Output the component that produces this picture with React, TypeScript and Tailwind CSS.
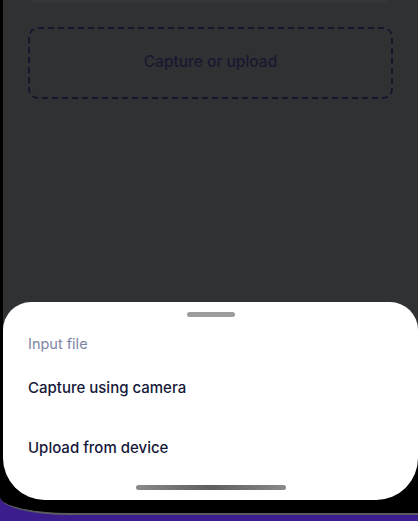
import React from "react";

const font = { fontFamily: "Inter, 'Noto Sans', sans-serif" };

function BottomSheet() {
  return (
    <div className="flex h-[198px] flex-col rounded-t-[28px] bg-white">
      <div className="mx-auto mt-[10px] h-[5px] w-[48px] rounded-full bg-[#9d9d9d]" />
      <div className="flex flex-col px-[25px]">
        <p className="mt-[17px] text-[14.5px] leading-[20px] text-[#7c84a4]">Input file</p>
        <button className="mt-[24px] text-left text-[15px] font-medium leading-[20px] text-[#141838]">
          Capture using camera
        </button>
        <button className="mt-[40px] text-left text-[15px] font-medium leading-[20px] text-[#141838]">
          Upload from device
        </button>
      </div>
      <div className="mx-auto mt-auto mb-[10px] h-[5px] w-[150px] rounded-full bg-gradient-to-r from-[#8a8a8a] via-[#5e5e5e] to-[#8a8a8a]" />
    </div>
  );
}

export default function App() {
  return (
    <div className="h-[521px] w-[418px] overflow-hidden bg-[#3b1d8e]" style={font}>
      <div className="h-[515px] rounded-bl-[70px_18px] border-b-2 border-[#5c5c60] bg-black pb-[13px] pl-[3px]">
        <div className="flex h-full flex-col overflow-hidden rounded-b-[42px] bg-[#303133]">
          <div className="mx-[28px] h-[3px] rounded-b-[8px] bg-[#343538]" />
          <div className="mx-[25px] mt-[24px] flex h-[72px] items-center justify-center rounded-[10px] border-2 border-dashed border-[#15152c]">
            <span className="-mt-[2px] text-[15.5px] font-medium text-[#181830]">Capture or upload</span>
          </div>
          <div className="flex-1" />
          <BottomSheet />
        </div>
      </div>
    </div>
  );
}
